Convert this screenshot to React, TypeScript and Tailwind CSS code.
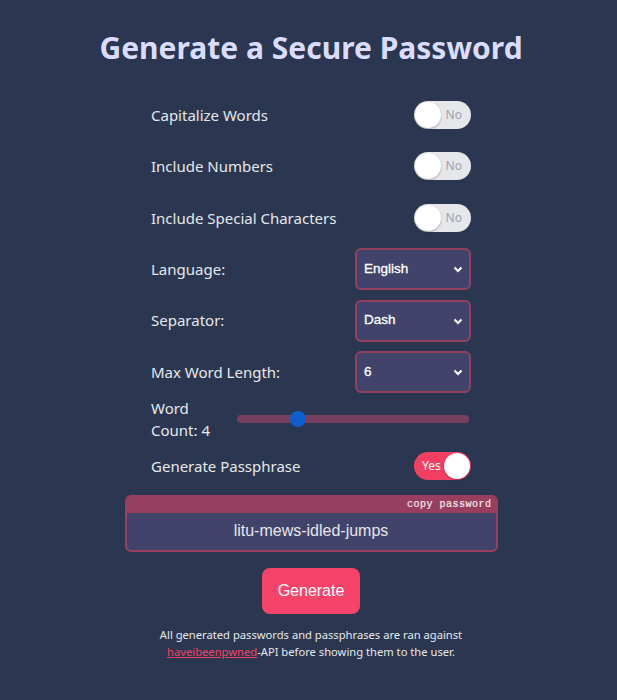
import React from "react";

const sans = { fontFamily: '"Noto Sans", "Open Sans", sans-serif' };

function Toggle({ on }: { on: boolean }) {
  return on ? (
    <div className="relative h-[28px] w-[57px] rounded-full bg-[#f43f63]">
      <span className="absolute left-[8px] top-[6px] text-[12px] leading-[16px] text-white" style={sans}>Yes</span>
      <div className="absolute right-[1px] top-[1px] h-[26px] w-[26px] rounded-full bg-white shadow-[0_1px_2px_rgba(0,0,0,0.3)]" />
    </div>
  ) : (
    <div className="relative h-[28px] w-[57px] rounded-full bg-[#e5e7eb]">
      <span className="absolute right-[9px] top-[6px] text-[12px] leading-[16px] text-[#9ca3af]" style={sans}>No</span>
      <div className="absolute left-[1px] top-[1px] h-[26px] w-[26px] rounded-full bg-white shadow-[0_1px_2px_rgba(0,0,0,0.3)]" />
    </div>
  );
}

function Select({ value }: { value: string }) {
  return (
    <div className="flex h-[42px] w-[116px] items-center justify-between rounded-[6px] border-2 border-[#93405f] bg-[#42436a] pl-[7px] pr-[6px]">
      <span className="text-[13.5px] text-white [-webkit-text-stroke:0.3px_white]" style={{ fontFamily: '"Liberation Sans", Arial, sans-serif' }}>{value}</span>
      <svg width="10" height="10" viewBox="0 0 10 10">
        <path d="M1.5 3.5 L5 7 L8.5 3.5" stroke="white" strokeWidth="2" fill="none" />
      </svg>
    </div>
  );
}

function Row({ label, children }: { label: string; children: React.ReactNode }) {
  return (
    <div className="flex h-[42px] items-center justify-between">
      <span className="text-[15px] text-[#e5e7eb]" style={sans}>{label}</span>
      {children}
    </div>
  );
}

export default function App() {
  return (
    <div className="min-h-[700px] w-full bg-[#2b3750] pl-[5px] pt-[27px]">
      <h1 className="text-center text-[30px] font-bold leading-[42px] text-[#dadcfd]" style={sans}>
        Generate a Secure Password
      </h1>
      <div className="mx-auto mt-[25px] flex w-[320px] flex-col gap-[9.4px]">
        <Row label="Capitalize Words"><Toggle on={false} /></Row>
        <Row label="Include Numbers"><Toggle on={false} /></Row>
        <Row label="Include Special Characters"><Toggle on={false} /></Row>
        <Row label="Language:"><Select value="English" /></Row>
        <Row label="Separator:"><Select value="Dash" /></Row>
        <Row label="Max Word Length:"><Select value="6" /></Row>
      </div>
      <div className="mx-auto mt-[4px] flex w-[320px] items-center">
        <div className="w-[86px] text-[15px] leading-[22px] text-[#e5e7eb]" style={sans}>
          Word Count: 4
        </div>
        <div className="relative h-[8px] w-[232px] rounded-full bg-[#763f5e]">
          <div className="absolute left-[53px] top-[-4px] h-[16px] w-[16px] rounded-full bg-[#0d5fd0]" />
        </div>
      </div>
      <div className="mx-auto mt-[4px] flex h-[42px] w-[320px] items-center justify-between">
        <span className="text-[15px] text-[#e5e7eb]" style={sans}>Generate Passphrase</span>
        <Toggle on={true} />
      </div>
      <div className="mx-auto mt-[8px] w-[373px] overflow-hidden rounded-[6px] border-2 border-[#983f5f] bg-[#42436a]">
        <div className="flex h-[16px] items-center justify-end bg-[#983f5f] pr-[4px]">
          <span className="text-[10px] tracking-[0.5px] text-[#f3e8ee] [-webkit-text-stroke:0.2px_#f3e8ee]" style={{ fontFamily: '"Liberation Mono", "DejaVu Sans Mono", monospace' }}>copy password</span>
        </div>
        <div className="flex h-[37px] items-center justify-center pb-[1px] text-[16px] text-[#e5e7eb]" style={{ fontFamily: '"Liberation Sans", Arial, sans-serif' }}>
          litu-mews-idled-jumps
        </div>
      </div>
      <div className="mt-[16px] flex justify-center">
        <button className="h-[46px] w-[98px] rounded-[8px] bg-[#f6436a] text-[16px] text-white" style={{ fontFamily: '"Liberation Sans", Arial, sans-serif' }}>
          Generate
        </button>
      </div>
      <p className="mt-[12px] text-center text-[11.2px] leading-[17px] text-[#e5e7eb]" style={sans}>
        All generated passwords and passphrases are ran against
        <br />
        <span className="text-[#f43f63] underline">haveibeenpwned</span>-API before showing them to the user.
      </p>
    </div>
  );
}
